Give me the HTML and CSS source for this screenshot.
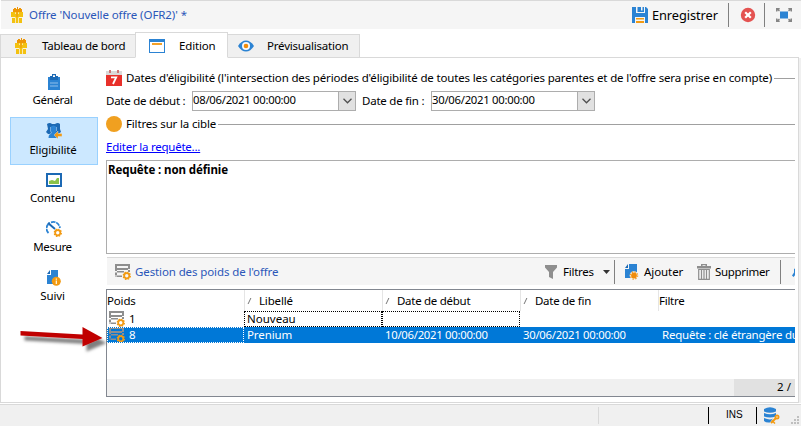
FILE: index.html
```html
<!DOCTYPE html>
<html lang="fr">
<head>
<meta charset="utf-8">
<title>Offre 'Nouvelle offre (OFR2)'</title>
<link rel="stylesheet" href="styles.css">
</head>
<body>
<svg class="defs" width="0" height="0">
  <defs>
    <symbol id="gift" viewBox="0 0 12 16">
      <path fill="#ee9606" d="M2 2h1V1h2v1h1V0h1v2h1V1h2v1h1v3H2z"/>
      <path fill="#f3c110" d="M0 5h12v5H0zM1 10h10v6H1z"/>
      <path fill="#f0a90c" d="M5 5h2v5H5z"/>
      <path fill="#fbf3d8" d="M4 5.500h1v1.200H4zM7 5.500h1v1.200H7zM1 10h3.500v1H1zM7.500 10H11v1H7.500zM4 11h.8v5H4zM7.200 11H8v5h-.8z"/>
    </symbol>
    <symbol id="gear" viewBox="0 0 8 8">
      <path fill="none" stroke="#f29a12" stroke-width="1.200" stroke-dasharray="1.500 1.170" d="M4 .6a3.400 3.400 0 1 1 0 6.800a3.400 3.400 0 1 1 0-6.800"/>
      <circle cx="4" cy="4" r="2.400" fill="none" stroke="#f29a12" stroke-width="1.600"/>
    </symbol>
    <symbol id="weight" viewBox="0 0 16 16">
      <path fill="#8e8e8e" fill-rule="evenodd" d="M0 0h15v6H0zM2 2v2h11V2zM0 6h2v6.500H0zM0 7h9v1.600H0zM0 11.500h7V13H0zM13 5h2v3h-2z"/>
      <use href="#gear" x="7.500" y="7.500" width="8.500" height="8.500"/>
    </symbol>
  </defs>
</svg>

<header class="titlebar">
  <svg width="12" height="16"><use href="#gift"/></svg>
  <h1 class="t t-title">Offre 'Nouvelle offre (OFR2)' *</h1>
  <div class="actions">
    <svg width="16" height="16" viewBox="0 0 16 16">
      <path fill="#2b83d3" d="M0 0h4v6h9V0h1l2 2v14h-3v-6H3v6H0z"/>
      <path fill="#2b83d3" d="M5.500 0H12v5H5.500z"/><path fill="#f5f5f5" d="M9 0h1.500v3.500H9z"/>
      <path fill="#f29a12" d="M4 11h8v1.500H4zM4 14h8v2H4z"/>
    </svg>
    <span class="t t-save">Enregistrer</span>
    <i class="vsep"></i>
    <svg class="close" width="16" height="16" viewBox="0 0 16 16">
      <circle cx="8" cy="8" r="7.200" fill="#e45351"/>
      <path stroke="#fff" stroke-width="2.200" d="M5.200 5.200l5.600 5.600M10.800 5.200l-5.600 5.600"/>
    </svg>
    <i class="vsep"></i>
    <svg class="expand" width="16" height="14" viewBox="0 0 16 14">
      <path fill="#2b83d3" d="M4 3.500h8v7H4z"/>
      <path fill="none" stroke="#858585" stroke-width="1.500" d="M.7 3.500V.7h3M12.300.7h3v2.800M.7 10.500v2.800h3M12.300 13.300h3v-2.800M1 1l2.500 2M15 1l-2.500 2M1 13l2.500-2M15 13l-2.500-2"/>
    </svg>
  </div>
</header>

<nav class="tabs">
  <div class="tab tab-board"><svg width="12" height="16"><use href="#gift"/></svg><span class="t t-board">Tableau de bord</span></div>
  <div class="tab tab-edit active">
    <svg width="16" height="14" viewBox="0 0 16 14"><path fill="#2b83d3" d="M0 0h16v14H0z"/><path fill="#fff" d="M1 3h14v10H1z"/><path fill="#f3a027" d="M3 4h10v2H3z"/></svg>
    <span class="t t-edit">Edition</span>
  </div>
  <div class="tab tab-preview">
    <svg width="16" height="12" viewBox="0 0 16 12"><path fill="#2b83d3" d="M0 6Q3.500.5 8 .5T16 6Q12.500 11.500 8 11.500T0 6"/><circle cx="8" cy="6" r="4" fill="#f5f8fb"/><circle cx="8" cy="6" r="2.300" fill="#f08c0a"/></svg>
    <span class="t t-preview">Prévisualisation</span>
  </div>
  <div class="tabs-rest"></div>
</nav>

<main class="panel">
  <aside class="side">
    <div class="item">
      <svg width="12" height="16" viewBox="0 0 12 16"><path fill="#2b83d3" d="M0 3h12v13H0z"/><path fill="#1c69b4" d="M2 2h2V0h4v2h2v4H2z"/><path fill="#fff" d="M5 1.200h2V3H5z"/><path fill="#8fc0ec" d="M2 8.500h8v1H2zM2 11.500h8v1H2z"/></svg>
      <span class="t t-general">Général</span>
    </div>
    <div class="item selected">
      <svg width="16" height="16" viewBox="0 0 16 16"><path fill="#1c69b4" d="M1 1q3-2 5 0h3q3-2 5 0v5l1 3-3 2H2L0 9l2-3z"/><path fill="#2b83d3" d="M4.500 4q3-3 6 0v4l-1 2 2 5H2.500q0-4 3-5l-1-2z"/><path fill="none" stroke="#a9d0f2" stroke-width=".6" d="M4.500 4v4l1 2-3 2M10.500 4v4"/><path fill="#f29a12" stroke="#cce8ff" stroke-width=".4" d="M8 12l4-4v2.500h4v3h-4V16z"/></svg>
      <span class="t t-elig">Eligibilité</span>
    </div>
    <div class="item">
      <svg width="16" height="14" viewBox="0 0 16 14"><path fill="#1c69b4" d="M0 0h16v14H0z"/><path fill="#fff" d="M2 2h12v10H2z"/><path fill="#8bc34a" d="M3 11V8l3-1 3 1 2-3h2v6z"/></svg>
      <span class="t t-contenu">Contenu</span>
    </div>
    <div class="item">
      <svg width="16" height="16" viewBox="0 0 16 16"><path fill="none" stroke="#2b83d3" stroke-width="1.800" stroke-dasharray="4.500 .8" d="M2.500 12A6.300 6.300 0 0 1 4 1.800M5 1.300Q12-.5 14 7"/><path stroke="#1c69b4" stroke-width="2" d="M2 2l7 6"/><use href="#gear" x="7.500" y="7.500" width="8.500" height="8.500"/></svg>
      <span class="t t-mesure">Mesure</span>
    </div>
    <div class="item">
      <svg width="14" height="16" viewBox="0 0 14 16"><path fill="#2b83d3" d="M4 0h7v14H0V5h4z"/><path fill="#1c69b4" d="M0 4l3-4v4z"/><circle cx="9.300" cy="11.300" r="4.500" fill="#f29a12"/><path fill="#fff3d6" d="M8.700 8.500h1.300v1.200H8.700zM8.700 10.500h1.300V14H8.700z"/></svg>
      <span class="t t-suivi">Suivi</span>
    </div>
  </aside>

  <section class="content">
    <div class="legend dates">
      <svg width="16" height="16" viewBox="0 0 16 16"><path fill="#d9d9d9" d="M0 1h16v4H0z"/><path fill="#e8302a" d="M0 5h16v11H0z"/><path fill="#c77" d="M3 0h2v3H3zM11 0h2v3h-2z"/><path fill="none" stroke="#fff" stroke-width="1.800" d="M5 7.300h5.200L7 14"/></svg>
      <span class="t t-dates">Dates d'éligibilité (l'intersection des périodes d'éligibilité de toutes les catégories parentes et de l'offre sera prise en compte)</span>
      <i class="rule"></i>
    </div>
    <div class="fields">
      <label class="t t-start">Date de début :</label>
      <div class="combo"><span class="t t-date">08/06/2021 00:00:00</span><b><svg width="9" height="6" viewBox="0 0 9 6"><path d="M.5 .8l4 4 4-4" fill="none" stroke="#505050" stroke-width="1.300"/></svg></b></div>
      <label class="t t-end">Date de fin :</label>
      <div class="combo"><span class="t t-date">30/06/2021 00:00:00</span><b><svg width="9" height="6" viewBox="0 0 9 6"><path d="M.5 .8l4 4 4-4" fill="none" stroke="#505050" stroke-width="1.300"/></svg></b></div>
    </div>
    <div class="legend target">
      <i class="dot"></i>
      <span class="t t-target">Filtres sur la cible</span>
      <i class="rule"></i>
    </div>
    <div class="linkrow"><a class="t t-link">Editer la requête...</a></div>
    <div class="query"><span class="t t-query">Requête : non définie</span></div>

    <div class="toolbar">
      <svg width="16" height="16"><use href="#weight"/></svg>
      <span class="t t-gestion">Gestion des poids de l'offre</span>
      <svg width="12" height="14" viewBox="0 0 12 14"><path fill="#8e8e8e" d="M0 0h12v2.500L8 7v7l-4-2V7L0 2.500z"/></svg>
      <span class="t t-filtres">Filtres</span>
      <svg class="caret" width="7" height="4" viewBox="0 0 7 4"><path fill="#333" d="M0 0h7L3.500 4z"/></svg>
      <i class="vsep"></i>
      <svg class="add" width="14" height="16" viewBox="0 0 14 16"><path fill="#2b83d3" d="M4 0h8v14H0V5h4z"/><path fill="#1c69b4" d="M0 4l3-4v4z"/><path stroke="#f5f5f5" d="M3.500 0v4.500H0" fill="none"/><circle cx="9" cy="11.500" r="4.300" fill="#f5f5f5"/><circle cx="9" cy="11.500" r="2.900" fill="#f08c0a"/><circle cx="9" cy="11.500" r="3.600" fill="none" stroke="#f3a027" stroke-width="1.400" stroke-dasharray="1.400 1.430"/></svg>
      <span class="t t-ajouter">Ajouter</span>
      <svg width="14" height="16" viewBox="0 0 14 16"><path fill="#8e8e8e" d="M4 0h6v2h4v2.500H0V2h4z"/><path fill="#f5f5f5" d="M5.500 1.200h3V2h-3z"/><path fill="none" stroke="#8e8e8e" stroke-width="1.200" d="M1.700 5.500v9.800h10.600V5.500zM4.500 6v9M7 6v9M9.500 6v9"/></svg>
      <span class="t t-suppr">Supprimer</span>
      <i class="vsep"></i>
      <svg class="more" width="4" height="12" viewBox="0 0 4 12"><path fill="#2b83d3" d="M4 2v6L1.500 11 0 9.500 2 6.500V3z"/></svg>
    </div>

    <div class="table">
      <div class="row head">
        <div class="cell"><span class="t t-poids">Poids</span></div>
        <div class="cell sort"><em></em><span class="t t-lib">Libellé</span></div>
        <div class="cell sort"><em></em><span class="t t-deb">Date de début</span></div>
        <div class="cell sort"><em></em><span class="t t-fin">Date de fin</span></div>
        <div class="cell last"><span class="t t-filtre">Filtre</span></div>
      </div>
      <div class="row">
        <div class="cell"><svg width="16" height="16"><use href="#weight"/></svg><span class="t">1</span></div>
        <div class="cell focus"><span class="t t-nouveau">Nouveau</span></div>
        <div class="cell focus"></div>
        <div class="cell"></div>
        <div class="cell last"></div>
      </div>
      <div class="row chosen">
        <div class="cell focus"><svg width="16" height="16"><use href="#weight"/></svg><span class="t">8</span></div>
        <div class="cell"><span class="t t-prenium">Prenium</span></div>
        <div class="cell"><span class="t t-date">10/06/2021 00:00:00</span></div>
        <div class="cell"><span class="t t-date">30/06/2021 00:00:00</span></div>
        <div class="cell last"><span class="t t-cle">Requête : clé étrangère du</span></div>
      </div>
      <div class="blank"></div>
      <div class="count"><span class="t">2 / 1</span></div>
    </div>
  </section>
</main>

<footer class="status">
  <i class="s1"></i>
  <i class="s2"></i>
  <span class="ins">INS</span>
  <i class="s3"></i>
  <svg class="db" width="16" height="17" viewBox="0 0 16 17"><path fill="#2b83d3" d="M0 2Q6-1.500 12 2v2.500Q6 7 0 4.500zM0 6Q6 8.500 12 6v3.500Q6 11.500 0 9.500zM0 11q6 2.500 9 .5l-3 4Q2 16 0 14z"/><path fill="none" stroke="#f29a12" stroke-width="2" d="M7 16l5-5"/><circle cx="13" cy="10" r="1.600" fill="none" stroke="#f29a12" stroke-width="1.800"/><path stroke="#f29a12" stroke-width="1.500" d="M8 13.500l3 3"/></svg>
  <svg class="grip" width="8" height="8" viewBox="0 0 8 8"><path fill="#bfbfbf" d="M6 0h2v2H6zM3 3h2v2H3zM6 3h2v2H6zM0 6h2v2H0zM3 6h2v2H3zM6 6h2v2H6z"/></svg>
</footer>

<svg class="arrow" width="96" height="36" viewBox="0 0 96 36">
  <defs><filter id="soft" x="-10%" y="-40%" width="120%" height="200%"><feDropShadow dx="4" dy="5" stdDeviation="1.500" flood-color="#000" flood-opacity=".5"/></filter></defs>
  <path filter="url(#soft)" fill="#c00000" d="M0.500 6l62 3.500v-7.500l20 11-20 8.500v-7.500L0.500 10.500z"/>
</svg>
</body>
</html>
```

FILE: styles.css
```css
* { box-sizing: border-box; }
html { background: #fff; }
body {
  margin: 0;
  width: 801px;
  height: 426px;
  overflow: hidden;
  display: flex;
  flex-direction: column;
  font: 11.5px/16px "Noto Sans", "Open Sans", sans-serif;
  color: #000;
  background: #fff;
}
svg { display: block; flex: none; }
.defs { position: absolute; }
.t { display: block; flex: none; white-space: nowrap; letter-spacing: -0.16px; }
h1 { margin: 0; font: inherit; }

.titlebar {
  flex: none;
  height: 29px;
  margin-left: 1px;
  padding: 0 9px 0 10px;
  display: flex;
  align-items: center;
  background: #f5f5f5;
  border-top: 1px solid #d9d9d9;
}
.t-title { margin-left: 6px; color: #2b57b9; letter-spacing: -0.08px; }
.actions { margin-left: auto; display: flex; align-items: center; }
.t-save { margin-left: 4px; width: 76px; font-size: 12.8px; letter-spacing: -0.08px; }
.vsep { display: block; flex: none; width: 1px; height: 24px; background: #808080; }
.close { margin: 0 8px 0 11px; }
.expand { margin-left: 11px; }

.tabs { flex: none; height: 29px; display: flex; align-items: flex-end; }
.tab {
  flex: none;
  height: 24px;
  display: flex;
  align-items: center;
  background: #f0f0f0;
  border: 1px solid #d9d9d9;
}
.tab-board { width: 135px; padding-left: 14px; border-right: 0; }
.tab-edit { width: 93px; padding-left: 13px; }
.tab-preview { width: 132px; padding-left: 10px; border-left: 0; }
.tab.active { height: 26px; padding-top: 2px; background: #fff; border-bottom-color: #fff; }
.tabs-rest { width: 439px; height: 1px; background: #d9d9d9; }
.t-board { margin-left: 15px; letter-spacing: -0.26px; }
.t-edit { margin-left: 14px; }
.t-preview { margin-left: 13px; letter-spacing: -0.2px; }

.panel {
  flex: none;
  width: 799px;
  height: 345px;
  display: flex;
  border: 1px solid #d9d9d9;
  border-top: 0;
  box-shadow: 2px 0 0 #f0f0f0;
}
.side { flex: none; width: 105px; padding: 10px 0 0 9px; display: flex; flex-direction: column; gap: 1px; }
.item {
  width: 88px;
  height: 48px;
  display: flex;
  flex-direction: column;
  align-items: center;
  padding-top: 6px;
  border: 0 solid #99d1ff;
}
.item svg { height: 16px; }
.item .t { margin-top: 2px; margin-right: 3px; }
.selected { background: #cce8ff; border-width: 1px; padding-top: 5px; }
.item .t-elig { margin-top: 3px; margin-right: 2px; }
.t-general, .t-mesure { letter-spacing: -0.35px; }

.content { flex: none; width: 689px; overflow: hidden; padding-top: 12px; }
.legend { display: flex; align-items: center; height: 16px; }
.legend .t { margin-left: 4px; }
.rule { flex: 1; height: 1px; background: #a0a0a0; margin-left: 2px; }
.fields { display: flex; align-items: center; height: 20px; margin-top: 5px; }
.t-start { width: 86px; letter-spacing: -0.24px; }
.t-end { width: 69px; margin-left: 6px; letter-spacing: -0.22px; }
.t-date { font-size: 11.3px; letter-spacing: -0.27px; }
.combo { flex: none; width: 164px; height: 20px; display: flex; justify-content: space-between; border: 1px solid #adadad; }
.combo b { width: 17px; display: flex; align-items: center; justify-content: center; background: #e1e1e1; border-left: 1px solid #adadad; }
.target { margin-top: 5px; }
.dot { width: 16px; height: 16px; border-radius: 50%; background: #f0a020; }
.linkrow { height: 16px; margin-top: 7px; display: flex; }
.t-link { color: #00f; text-decoration: underline; letter-spacing: -0.23px; }
.query { height: 94px; margin-top: 5px; padding: 1px; border: 1px solid #adadad; border-right: 0; font-weight: 700; }
.t-query { letter-spacing: -0.1px; }

.toolbar {
  height: 28px;
  margin: 3px 0 0 1px;
  padding-left: 8px;
  display: flex;
  align-items: center;
  background: #f5f5f5;
  border-top: 1px solid #d9d9d9;
}
.t-gestion { margin-left: 4px; width: 410px; color: #2b57b9; letter-spacing: -0.11px; }
.t-filtres { margin-left: 6px; width: 40px; letter-spacing: -0.25px; }
.caret { margin-right: 4px; }
.add { margin-left: 10px; }
.t-ajouter { margin-left: 5px; width: 53px; letter-spacing: -0.07px; }
.t-suppr { margin-left: 4px; width: 65px; letter-spacing: -0.3px; }
.more { margin-left: 11px; }

.table { height: 108px; margin-top: 4px; border: solid #828790; border-width: 1px 0 1px 1px; display: flex; flex-direction: column; }
.row { flex: none; height: 16px; display: flex; }
.cell { flex: none; width: 138px; display: flex; align-items: center; padding-left: 3px; overflow: hidden; }
.cell:first-child { width: 137px; padding-left: 2px; }
.cell.last { width: 137px; }
.head { height: 21px; }
.head .cell { border-left: 1px solid #e5e5e5; padding-left: 2px; }
.head .cell:first-child { border-left: 0; padding-left: 0; }
.head .cell.last { padding-left: 0; }
.sort em { width: 1px; height: 6px; margin: 0 9px 0 2px; background: #777; transform: skewX(-25deg); }
.t-deb, .t-fin, .t-filtre { letter-spacing: -0.28px; }
.t-nouveau { letter-spacing: 0; }
.t-prenium { letter-spacing: -0.1px; }
.t-cle { letter-spacing: -0.22px; }
.row .cell svg { margin-right: 4px; }
.chosen { background: #0078d7; color: #fff; }
.focus { border: 1px dotted #000; padding-left: 2px; }
.chosen .focus:first-child { border-color: #fff; padding-left: 1px; }
.chosen .cell.last { padding-left: 4px; }
.blank { flex: 1; }
.count { height: 17px; background: #f0f0f0; display: flex; justify-content: flex-end; }
.count .t { width: 61px; padding-left: 43px; background: #e1e1e1; overflow: hidden; letter-spacing: 0.1px; }

.status { flex: none; height: 23px; display: flex; align-items: center; background: #f0f0f0; border-top: 1px solid #fff; box-shadow: inset 0 1px 0 #d9d9d9; }
.status i { flex: none; width: 1px; height: 17px; background: #d9d9d9; }
.status .s1 { margin-left: 598px; }
.status .s2 { margin-left: 109px; background: #000; }
.status .s3 { margin-left: 13px; background: #000; }
.ins { margin-left: 17px; width: 17px; font: 10px/16px "Liberation Sans", sans-serif; }
.db { margin-left: 7px; }
.grip { margin-left: 11px; align-self: flex-end; margin-bottom: 2px; }

.arrow { position: absolute; left: 20px; top: 325px; }
```
